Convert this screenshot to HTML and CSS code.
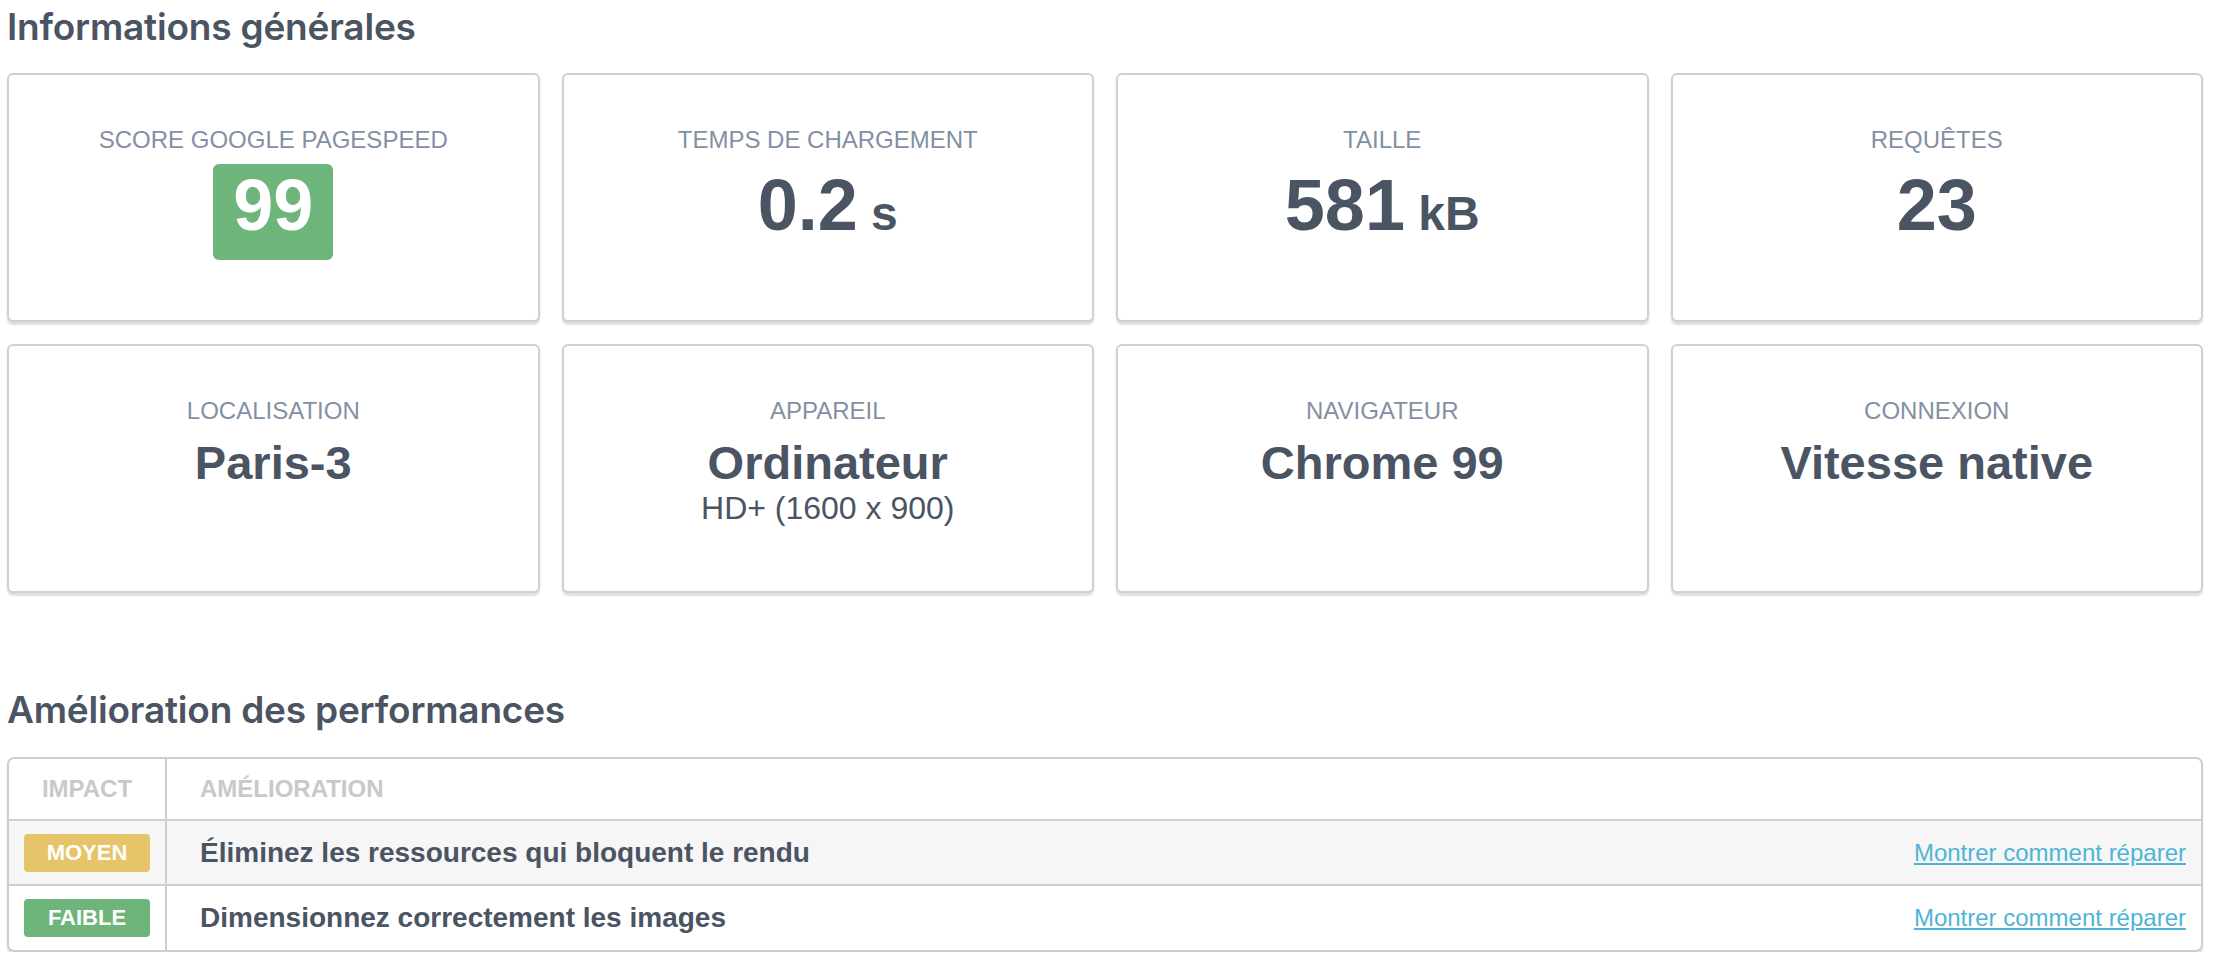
FILE: index.html
```html
<!DOCTYPE html>
<html lang="fr">
<head>
<meta charset="utf-8">
<title>Informations générales</title>
<link rel="stylesheet" href="styles.css">
</head>
<body>
<main class="page">
  <h2 class="section-title">Informations générales</h2>
  <div class="stats">
    <div class="card">
      <div class="label">SCORE GOOGLE PAGESPEED</div>
      <div class="value"><span class="score">99</span></div>
    </div>
    <div class="card">
      <div class="label">TEMPS DE CHARGEMENT</div>
      <div class="value">0.2<span class="unit"> s</span></div>
    </div>
    <div class="card">
      <div class="label">TAILLE</div>
      <div class="value">581<span class="unit"> kB</span></div>
    </div>
    <div class="card">
      <div class="label">REQUÊTES</div>
      <div class="value">23</div>
    </div>
    <div class="card">
      <div class="label">LOCALISATION</div>
      <div class="value value--small">Paris-3</div>
    </div>
    <div class="card">
      <div class="label">APPAREIL</div>
      <div class="value value--small">Ordinateur</div>
      <div class="sub">HD+ (1600 x 900)</div>
    </div>
    <div class="card">
      <div class="label">NAVIGATEUR</div>
      <div class="value value--small">Chrome 99</div>
    </div>
    <div class="card">
      <div class="label">CONNEXION</div>
      <div class="value value--small">Vitesse native</div>
    </div>
  </div>

  <h2 class="section-title section-title--spaced">Amélioration des performances</h2>
  <div class="table-wrap">
    <table class="perf">
      <thead>
        <tr>
          <th class="col-impact">IMPACT</th>
          <th class="col-text">AMÉLIORATION</th>
          <th class="col-link"></th>
        </tr>
      </thead>
      <tbody>
        <tr class="row-alt">
          <td class="col-impact"><span class="badge badge--medium">MOYEN</span></td>
          <td class="col-text">Éliminez les ressources qui bloquent le rendu</td>
          <td class="col-link"><a href="#" class="fix-link">Montrer comment réparer</a></td>
        </tr>
        <tr>
          <td class="col-impact"><span class="badge badge--low">FAIBLE</span></td>
          <td class="col-text">Dimensionnez correctement les images</td>
          <td class="col-link"><a href="#" class="fix-link">Montrer comment réparer</a></td>
        </tr>
      </tbody>
    </table>
  </div>
</main>
</body>
</html>
```
FILE: styles.css
```css
* { box-sizing: border-box; }

html, body {
  margin: 0;
  padding: 0;
  background: #ffffff;
}

body {
  font-family: "Liberation Sans", Arial, Helvetica, sans-serif;
  color: #4a5462;
}

.page {
  padding: 5px 10px 0 7px;
}

.section-title {
  margin: 0 0 25px 0;
  font-family: Inter, "Liberation Sans", sans-serif;
  font-weight: 600;
  font-size: 37px;
  line-height: 43px;
  color: #4a5462;
  letter-spacing: -0.2px;
}

.section-title--spaced {
  margin-top: 95px;
  margin-bottom: 26px;
}

.stats {
  display: grid;
  grid-template-columns: repeat(4, 1fr);
  gap: 22px;
}

.card {
  height: 249px;
  border: 2px solid #d0d0d0;
  border-radius: 6px;
  box-shadow: 0 3px 2px rgba(0, 0, 0, 0.13);
  padding-top: 50px;
  text-align: center;
  background: #fff;
}

.label {
  font-size: 24px;
  line-height: 29px;
  color: #8390a4;
}

.value {
  margin-top: 8px;
  font-size: 72px;
  line-height: 86px;
  font-weight: 700;
  color: #4a5462;
}

.value--small {
  margin-top: 10px;
  font-size: 47px;
  line-height: 56px;
}

.unit {
  font-size: 48px;
}

.score {
  display: inline-block;
  background: #6db57b;
  color: #ffffff;
  border-radius: 6px;
  line-height: 72px;
  padding: 5px 20px 19px;
}

.sub {
  font-size: 32px;
  line-height: 34px;
  color: #4a5462;
}

.table-wrap {
  border: 2px solid #cecece;
  border-radius: 7px;
  box-shadow: 0 3px 2px rgba(0, 0, 0, 0.13);
  overflow: hidden;
}

.perf {
  width: 100%;
  border-collapse: collapse;
}

.perf th,
.perf td {
  padding: 0;
  border-bottom: 2px solid #cecece;
  vertical-align: middle;
}

.perf tbody tr:last-child td {
  border-bottom: 0;
}

.perf th {
  height: 61px;
  font-size: 24px;
  font-weight: 700;
  color: #c9c9c9;
  text-align: left;
}

.perf td {
  height: 65px;
}

.perf .col-impact {
  width: 157px;
  border-right: 2px solid #cecece;
  text-align: center;
}

.perf .col-text {
  padding-left: 33px;
}

.perf td.col-text {
  font-size: 28px;
  font-weight: 700;
  color: #4a5462;
}

.perf .col-link {
  text-align: right;
  padding-right: 15px;
}

.row-alt td {
  background: #f6f6f6;
}

.badge {
  display: inline-block;
  width: 126px;
  height: 38px;
  line-height: 38px;
  border-radius: 4px;
  color: #ffffff;
  font-size: 22px;
  font-weight: 700;
  text-align: center;
}

.badge--medium { background: #e6c46a; }
.badge--low { background: #6db57b; }

.fix-link {
  font-size: 24px;
  color: #4fb4d6;
  text-decoration: underline;
}
```
